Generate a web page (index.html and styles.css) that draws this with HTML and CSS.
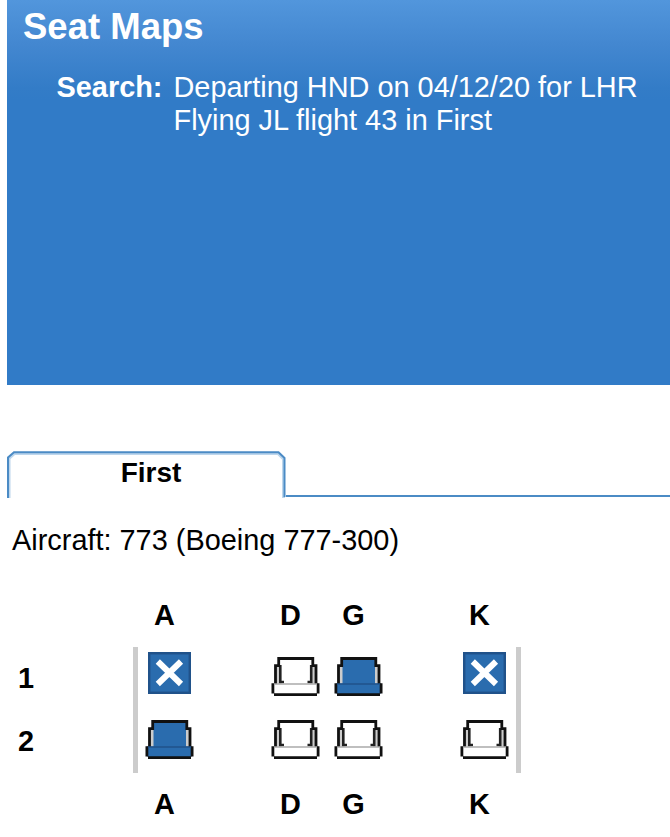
FILE: index.html
```html
<!DOCTYPE html>
<html lang="en">
<head>
    <meta charset="UTF-8">
    <meta name="viewport" content="width=device-width, initial-scale=1.0">
    <title>Seat Maps</title>
    <link rel="stylesheet" href="styles.css">
</head>
<body>

    <!-- Seat icons -->
    <svg class="icon-defs" width="0" height="0">
        <symbol id="seat" viewBox="0 0 50 50">
            <path class="back" d="M7.5 34V8.5H42V34Z"/>
            <path class="arm" d="M4.5 34V15.5H8.5V34ZM41 34V15.5H45V34Z"/>
            <path class="cushion" d="M2 33.500H47V43.500H45.500V45H3.500V43.500H2Z"/>
            <path class="inner" d="M9.300 15V33.500M40.200 15V33.500M9 32H13M36.500 32H40.500"/>
            <path class="outline" d="M4.500 34V15.700H7.700V8.500H41.800V15.700H45V34"/>
            <path class="outline" d="M1.900 33.300V43.500M47.100 33.300V43.500M3 44.700H46"/>
            <path class="seam" d="M3 34H46"/>
        </symbol>
        <symbol id="blocked" viewBox="0 0 50 50">
            <rect class="box" x="4.200" y="3.200" width="40.600" height="39.600"/>
            <path class="cross" d="M12.800 11.500L36 34M36 11.500L12.800 34"/>
        </symbol>
    </svg>

    <header class="banner">
        <h1>Seat Maps</h1>
        <div class="search">
            <span class="label">Search:</span>
            <p>Departing HND on 04/12/20 for LHR<br>Flying JL flight 43 in First</p>
        </div>
    </header>

    <nav class="tabs">
        <div class="tab">
            <svg class="tab-shape" viewBox="0 0 279 47">
                <path class="tab-glow" d="M2 47V7.500L7.500 2.500H271L276.500 8V47"/>
                <path class="tab-line" d="M1 47V6.500L7 1.200H271.500L277.500 7V46"/>
            </svg>
            <span>First</span>
        </div>
        <div class="tab-rule"></div>
    </nav>

    <p class="aircraft">Aircraft: 773 (Boeing 777-300)</p>

    <main class="seat-map">
        <div class="letters">
            <span>A</span><span></span><span>D</span><span>G</span><span></span><span>K</span>
        </div>
        <div class="rows">
            <div class="numbers">
                <span>1</span>
                <span>2</span>
            </div>
            <div class="cabin">
                <svg class="blocked"><use href="#blocked"/></svg>
                <span></span>
                <svg class="seat"><use href="#seat"/></svg>
                <svg class="seat taken"><use href="#seat"/></svg>
                <span></span>
                <svg class="blocked"><use href="#blocked"/></svg>

                <svg class="seat taken"><use href="#seat"/></svg>
                <span></span>
                <svg class="seat"><use href="#seat"/></svg>
                <svg class="seat"><use href="#seat"/></svg>
                <span></span>
                <svg class="seat"><use href="#seat"/></svg>
            </div>
        </div>
        <div class="letters">
            <span>A</span><span></span><span>D</span><span>G</span><span></span><span>K</span>
        </div>
    </main>

</body>
</html>
```
FILE: styles.css
```css
body {
    margin: 0;
    font-family: Arial, "Liberation Sans", sans-serif;
    font-size: 28.9px;
    line-height: 33px;
    background: #fff;
    color: #000;
    overflow: hidden;
}

h1, p {
    margin: 0;
}

/* Banner */
.banner {
    box-sizing: border-box;
    height: 385px;
    margin-left: 7px;
    padding: 6px 0 0 16px;
    background: linear-gradient(#5296dc 0, #4387d0 45px, #337cc7 88px, #317bc7 100px);
    color: #fff;
}

h1 {
    font-size: 36.5px;
    line-height: 42px;
}

.search {
    display: flex;
    gap: 11px;
    padding: 23px 0 0 33.5px;
    white-space: nowrap;
}

.label {
    width: 106px;
    font-weight: bold;
}

/* Tabs */
.tabs {
    display: flex;
    align-items: flex-end;
    margin: 66px 0 0 7px;
}

.tab {
    display: grid;
    width: 279px;
    height: 47px;
    font-size: 28px;
    font-weight: bold;
    text-align: center;
}

.tab-shape,
.tab span {
    grid-area: 1 / 1;
}

.tab span {
    padding: 5px 0 0 9px;
}

.tab-shape {
    width: 279px;
    height: 47px;
    fill: none;
}

.tab-line {
    stroke: #4b8bc5;
    stroke-width: 2;
}

.tab-glow {
    stroke: #bdd6ec;
    stroke-width: 3;
}

.tab-rule {
    flex: 1;
    height: 2px;
    margin-bottom: 1px;
    background: #4b8bc5;
}

.aircraft {
    padding: 26px 0 0 12px;
}

/* Seat map */
.seat-map {
    padding-top: 42px;
    font-weight: bold;
}

.letters {
    display: grid;
    grid-template-columns: repeat(6, 63px);
    padding-left: 133px;
    text-align: center;
}

.rows {
    display: flex;
    margin: 15px 0;
}

.numbers {
    display: grid;
    grid-template-rows: repeat(2, 63px);
    align-items: center;
    width: 115px;
    padding-left: 18px;
}

.cabin {
    display: grid;
    grid-template-columns: repeat(6, 63px);
    grid-template-rows: repeat(2, 63px);
    border: solid #ccc;
    border-width: 0 5px;
}

.cabin svg {
    width: 50px;
    height: 50px;
    margin: 3px 0 0 7px;
}

/* Icons */
.icon-defs {
    display: block;
}

.seat {
    color: #fff;
    --inner: #222;
    --seam: #aaa;
}

.taken {
    color: #2a6cae;
    --inner: none;
    --seam: #20528a;
}

.back,
.cushion {
    fill: currentColor;
}

.arm {
    fill: #ccc;
}

.outline {
    fill: none;
    stroke: #111;
    stroke-width: 2.8;
}

.inner {
    stroke: var(--inner);
    stroke-width: 2.6;
}

.seam {
    stroke: var(--seam);
    stroke-width: 1.5;
}

.box {
    fill: #2a6cae;
    stroke: #20528a;
    stroke-width: 2.4;
}

.cross {
    stroke: #fff;
    stroke-width: 6;
}
```
